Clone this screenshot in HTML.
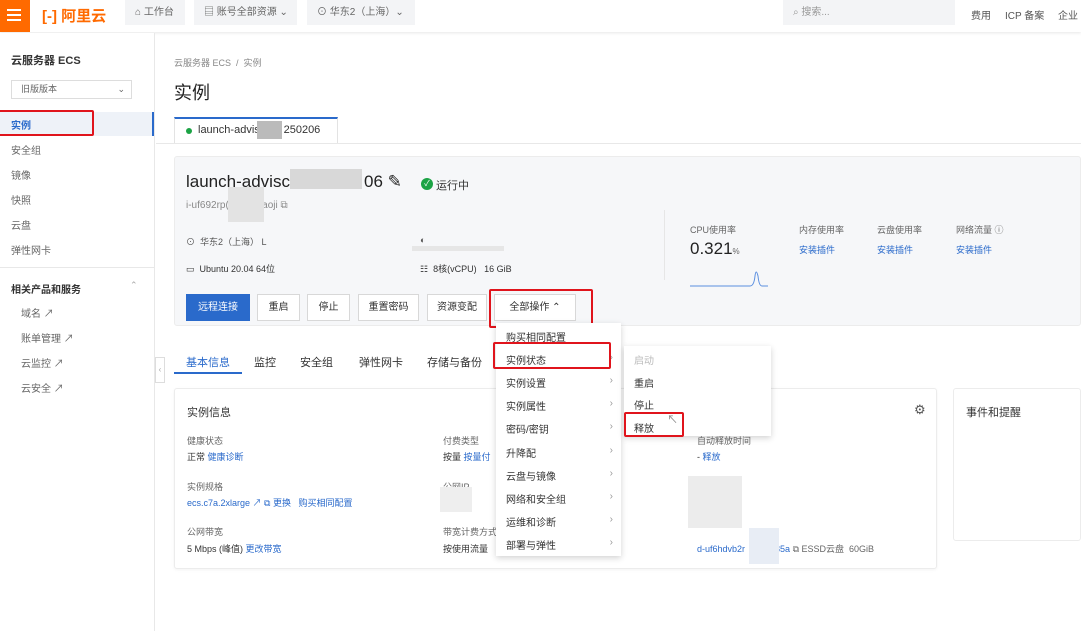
<!DOCTYPE html>
<html><head><meta charset="utf-8"><style>
*{margin:0;padding:0;box-sizing:border-box}
body{width:1081px;height:631px;overflow:hidden;background:#fff;font-family:"Liberation Sans","Noto Sans CJK SC",sans-serif;color:#333;position:relative;font-size:10px}
.a{position:absolute;white-space:nowrap}
.hdr{position:absolute;left:0;top:0;width:1081px;height:32px;background:#fff;box-shadow:0 1px 3px rgba(0,0,0,.1)}
.pill{position:absolute;top:0;height:25px;background:#f3f4f6;color:#666;font-size:10px;line-height:25px;padding-left:10px}
.btn{position:absolute;top:294px;height:27px;border:1px solid #d8d8d8;background:#fff;font-size:10px;line-height:25px;text-align:center;color:#333}
.red{position:absolute;border:2px solid #e0141c;border-radius:2px}
.blue{color:#2a6acb}
.g{color:#888}
.menu{position:absolute;background:#fff;box-shadow:0 2px 6px rgba(0,0,0,.18);font-size:10px}
.mi{position:absolute;left:10px;color:#333}
.ar{position:absolute;right:8px;color:#999}
.blur{position:absolute;background:#e6e6e6}
</style></head><body>
<div class="hdr">
 <div class="a" style="left:0;top:0;width:30px;height:32px;background:#ff6a00"></div>
 <div class="a" style="left:7px;top:9px;width:14px;height:2px;background:#fff;box-shadow:0 5px 0 #fff,0 10px 0 #fff"></div>
 <div class="a" style="left:42px;top:5px;font-size:15px;font-weight:bold;color:#ff6a00">[-] 阿里云</div>
 <div class="pill" style="left:125px;width:60px">⌂ 工作台</div>
 <div class="pill" style="left:194px;width:103px">▤ 账号全部资源 ⌄</div>
 <div class="pill" style="left:307px;width:108px">⊙ 华东2（上海）⌄</div>
 <div class="pill" style="left:783px;width:172px;color:#999">⌕ 搜索...</div>
 <div class="a" style="left:971px;top:7px;font-size:10px;color:#555">费用</div>
 <div class="a" style="left:1005px;top:7px;font-size:10px;color:#555">ICP 备案</div>
 <div class="a" style="left:1058px;top:7px;font-size:10px;color:#555">企业</div>
</div>
<!-- sidebar -->
<div class="a" style="left:0;top:33px;width:155px;height:598px;background:#fff;border-right:1px solid #e8e8e8"></div>
<div class="a" style="left:11px;top:52px;font-size:11px;font-weight:bold;color:#333">云服务器 ECS</div>
<div class="a" style="left:11px;top:80px;width:121px;height:19px;border:1px solid #ddd;font-size:9px;line-height:17px;padding-left:9px;color:#666">旧版版本<span style="position:absolute;right:6px">⌄</span></div>
<div class="a" style="left:0;top:112px;width:154px;height:24px;background:#eef2f8;border-right:2px solid #2a6acb"></div>
<div class="a" style="left:11px;top:117px;font-size:10px;color:#2a6acb;font-weight:bold">实例</div>
<div class="red" style="left:-2px;top:110px;width:96px;height:26px"></div>
<div class="a g" style="left:11px;top:142px;font-size:10px;color:#666">安全组</div>
<div class="a g" style="left:11px;top:167px;font-size:10px;color:#666">镜像</div>
<div class="a g" style="left:11px;top:192px;font-size:10px;color:#666">快照</div>
<div class="a g" style="left:11px;top:217px;font-size:10px;color:#666">云盘</div>
<div class="a g" style="left:11px;top:242px;font-size:10px;color:#666">弹性网卡</div>
<div class="a" style="left:0;top:267px;width:154px;height:1px;background:#e8e8e8"></div>
<div class="a" style="left:11px;top:281px;font-size:10px;font-weight:bold;color:#333">相关产品和服务</div>
<div class="a" style="left:130px;top:280px;color:#aaa;font-size:9px">⌃</div>
<div class="a" style="left:21px;top:305px;font-size:10px;color:#666">域名 ↗</div>
<div class="a" style="left:21px;top:330px;font-size:10px;color:#666">账单管理 ↗</div>
<div class="a" style="left:21px;top:355px;font-size:10px;color:#666">云监控 ↗</div>
<div class="a" style="left:21px;top:380px;font-size:10px;color:#666">云安全 ↗</div>
<div class="a" style="left:155px;top:357px;width:10px;height:26px;border:1px solid #ddd;background:#fff;color:#aaa;font-size:8px;line-height:24px;text-align:center">‹</div>
<!-- main -->
<div class="a" style="left:174px;top:56px;font-size:9px;color:#888">云服务器 ECS &nbsp;/&nbsp; 实例</div>
<div class="a" style="left:174px;top:79px;font-size:18px;color:#222">实例</div>
<div class="a" style="left:174px;top:117px;width:164px;height:27px;border:1px solid #e3e3e3;border-top:2px solid #2a6acb;border-bottom:none;background:#fff"></div>
<div class="a" style="left:186px;top:128px;width:6px;height:6px;border-radius:50%;background:#1ca345"></div>
<div class="a" style="left:198px;top:124px;font-size:11px;color:#333">launch-advisc&nbsp;&nbsp;&nbsp;&nbsp;&nbsp;&nbsp;250206</div>
<div class="blur" style="left:257px;top:121px;width:25px;height:18px;background:#bbb"></div>
<div class="a" style="left:156px;top:143px;width:925px;height:1px;background:#e8e8e8"></div>
<!-- card -->
<div class="a" style="left:174px;top:156px;width:907px;height:170px;background:#f6f7f9;border:1px solid #ececec;border-radius:3px"></div>
<div class="a" style="left:186px;top:172px;font-size:17px;color:#222">launch-advisc</div>
<div class="blur" style="left:290px;top:169px;width:72px;height:20px;background:#d8d8d8"></div>
<div class="a" style="left:364px;top:172px;font-size:17px;color:#222">06 ✎</div>
<div class="a" style="left:421px;top:178px;width:12px;height:12px;border-radius:50%;background:#1ca345;color:#fff;font-size:8px;line-height:12px;text-align:center">✓</div>
<div class="a" style="left:436px;top:177px;font-size:11px;color:#333">运行中</div>
<div class="a" style="left:186px;top:200px;font-size:10px;color:#888">i-uf692rp(&nbsp;&nbsp;&nbsp;&nbsp;&nbsp;&nbsp;&nbsp;&nbsp;&nbsp;&nbsp;4aoji ⧉</div>
<div class="blur" style="left:228px;top:187px;width:36px;height:35px;background:#e3e3e3"></div>
<div class="a" style="left:186px;top:235px;font-size:9px;color:#555">⊙&nbsp; 华东2（上海） L</div>
<div class="a" style="left:186px;top:262px;font-size:9px;color:#333">▭&nbsp; Ubuntu 20.04 64位</div>
<div class="a" style="left:420px;top:235px;font-size:9px;color:#555">◐</div>
<div class="blur" style="left:412px;top:246px;width:92px;height:5px"></div>
<div class="a" style="left:420px;top:262px;font-size:9px;color:#333">☷&nbsp; 8核(vCPU)&nbsp;&nbsp; 16 GiB</div>
<div class="a" style="left:664px;top:210px;width:1px;height:70px;background:#e6e6e6"></div>
<div class="a" style="left:690px;top:223px;font-size:9px;color:#666">CPU使用率</div>
<div class="a" style="left:690px;top:239px;font-size:17px;color:#222">0.321<span style="font-size:8px;color:#666">%</span></div>
<svg class="a" style="left:690px;top:266px" width="80" height="22"><path d="M0 20 H60 Q64 20 65 10 Q66 2 68 10 Q69 20 72 20 H78" fill="none" stroke="#5b8fe0" stroke-width="1"/></svg>
<div class="a" style="left:799px;top:223px;font-size:9px;color:#666">内存使用率</div>
<div class="a blue" style="left:799px;top:243px;font-size:9px">安装插件</div>
<div class="a" style="left:877px;top:223px;font-size:9px;color:#666">云盘使用率</div>
<div class="a blue" style="left:877px;top:243px;font-size:9px">安装插件</div>
<div class="a" style="left:956px;top:223px;font-size:9px;color:#666">网络流量 ⓘ</div>
<div class="a blue" style="left:956px;top:243px;font-size:9px">安装插件</div>
<div class="btn" style="left:186px;width:64px;background:#2a6acb;border-color:#2a6acb;color:#fff">远程连接</div>
<div class="btn" style="left:257px;width:43px">重启</div>
<div class="btn" style="left:307px;width:43px">停止</div>
<div class="btn" style="left:358px;width:61px">重置密码</div>
<div class="btn" style="left:427px;width:60px">资源变配</div>
<div class="btn" style="left:494px;width:82px">全部操作 ⌃</div>
<div class="red" style="left:489px;top:289px;width:104px;height:39px"></div>
<!-- tabs -->
<div class="a" style="left:186px;top:354px;font-size:11px;color:#2a6acb">基本信息</div>
<div class="a" style="left:174px;top:372px;width:68px;height:2px;background:#2a6acb"></div>
<div class="a" style="left:254px;top:354px;font-size:11px;color:#333">监控</div>
<div class="a" style="left:300px;top:354px;font-size:11px;color:#333">安全组</div>
<div class="a" style="left:359px;top:354px;font-size:11px;color:#333">弹性网卡</div>
<div class="a" style="left:427px;top:354px;font-size:11px;color:#333">存储与备份</div>
<!-- info card -->
<div class="a" style="left:174px;top:388px;width:763px;height:181px;background:#fff;border:1px solid #ececec;border-radius:3px;box-shadow:0 1px 3px rgba(0,0,0,.05)"></div>
<div class="a" style="left:953px;top:388px;width:128px;height:153px;background:#fff;border:1px solid #ececec;border-radius:3px"></div>
<div class="a" style="left:966px;top:404px;font-size:11px;color:#333">事件和提醒</div>
<div class="a" style="left:914px;top:402px;font-size:13px;color:#555">⚙</div>
<div class="a" style="left:187px;top:404px;font-size:11px;color:#333">实例信息</div>
<div class="a" style="left:187px;top:434px;font-size:9px;color:#666">健康状态</div>
<div class="a" style="left:187px;top:450px;font-size:9px;color:#333">正常 <span class="blue">健康诊断</span></div>
<div class="a" style="left:187px;top:480px;font-size:9px;color:#666">实例规格</div>
<div class="a blue" style="left:187px;top:496px;font-size:9px">ecs.c7a.2xlarge ↗ ⧉ 更换 &nbsp;&nbsp;购买相同配置</div>
<div class="a" style="left:187px;top:525px;font-size:9px;color:#666">公网带宽</div>
<div class="a" style="left:187px;top:542px;font-size:9px;color:#333">5 Mbps (峰值) <span class="blue">更改带宽</span></div>
<div class="a" style="left:443px;top:434px;font-size:9px;color:#666">付费类型</div>
<div class="a" style="left:443px;top:450px;font-size:9px;color:#333">按量 <span class="blue">按量付</span></div>
<div class="a" style="left:443px;top:480px;font-size:9px;color:#666">公网IP</div>
<div class="blur" style="left:440px;top:487px;width:32px;height:25px;background:#eee"></div>
<div class="a" style="left:443px;top:525px;font-size:9px;color:#666">带宽计费方式</div>
<div class="a" style="left:443px;top:542px;font-size:9px;color:#333">按使用流量</div>
<div class="a" style="left:697px;top:434px;font-size:9px;color:#666">自动释放时间</div>
<div class="a" style="left:697px;top:450px;font-size:9px;color:#333">- <span class="blue">释放</span></div>
<div class="blur" style="left:688px;top:476px;width:54px;height:52px;background:#ececec"></div>
<div class="a blue" style="left:697px;top:542px;font-size:9px">d-uf6hdvb2r&nbsp;&nbsp;&nbsp;&nbsp;&nbsp;&nbsp;&nbsp;&nbsp;&nbsp;&nbsp;185a <span style="color:#666">⧉ ESSD云盘&nbsp; 60GiB</span></div>
<div class="blur" style="left:749px;top:528px;width:30px;height:36px;background:#e8edf5"></div>
<!-- dropdown -->
<div class="menu" style="left:496px;top:323px;width:125px;height:233px">
 <div class="mi" style="top:6px">购买相同配置</div>
 <div class="mi" style="top:29px">实例状态</div><div class="ar" style="top:29px">›</div>
 <div class="mi" style="top:52px">实例设置</div><div class="ar" style="top:52px">›</div>
 <div class="mi" style="top:75px">实例属性</div><div class="ar" style="top:75px">›</div>
 <div class="mi" style="top:98px">密码/密钥</div><div class="ar" style="top:98px">›</div>
 <div class="mi" style="top:122px">升降配</div><div class="ar" style="top:122px">›</div>
 <div class="mi" style="top:145px">云盘与镜像</div><div class="ar" style="top:145px">›</div>
 <div class="mi" style="top:168px">网络和安全组</div><div class="ar" style="top:168px">›</div>
 <div class="mi" style="top:191px">运维和诊断</div><div class="ar" style="top:191px">›</div>
 <div class="mi" style="top:214px">部署与弹性</div><div class="ar" style="top:214px">›</div>
</div>
<div class="red" style="left:493px;top:342px;width:118px;height:27px"></div>
<div class="menu" style="left:624px;top:346px;width:147px;height:90px">
 <div class="mi" style="top:6px;color:#bbb">启动</div>
 <div class="mi" style="top:29px">重启</div>
 <div class="mi" style="top:51px">停止</div>
 <div class="mi" style="top:74px">释放</div>
</div>
<div class="a" style="left:667px;top:411px;font-size:11px;color:#888">↖</div>
<div class="red" style="left:624px;top:412px;width:60px;height:25px"></div>
</body></html>
